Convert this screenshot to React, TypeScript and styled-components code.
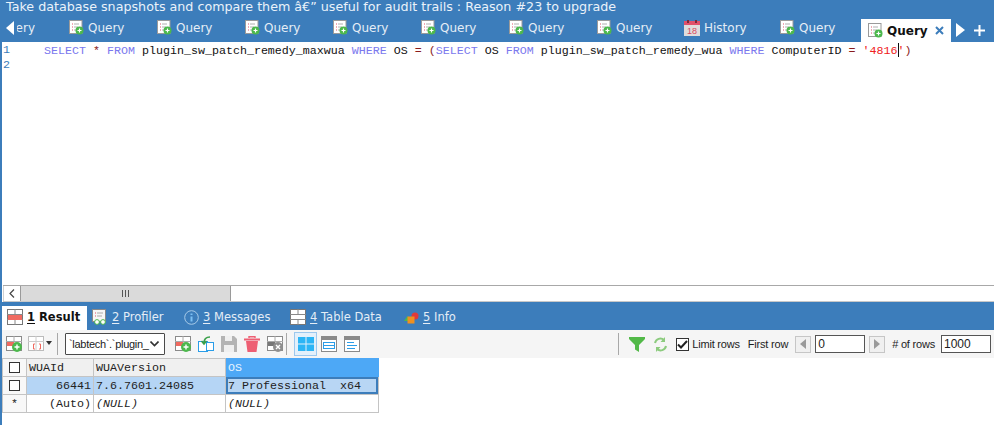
import React from "react";
import styled, { createGlobalStyle } from "styled-components";

const BLUE = "#3c7dbb";
const SANS = `"DejaVu Sans", Verdana, sans-serif`;
const MONO = `"Liberation Mono", "Courier New", monospace`;
const UI = `"Liberation Sans", Arial, sans-serif`;

const Global = createGlobalStyle`
  html, body { margin: 0; padding: 0; background: #fff; }
  body { width: 994px; height: 425px; overflow: hidden; }
`;

const Page = styled.div`
  width: 994px; height: 425px; display: flex; flex-direction: column;
  box-sizing: border-box; border-left: 2px solid ${BLUE}; background: #fff;
`;
const Title = styled.div`
  height: 15px; background: ${BLUE}; color: #eaf2fa; font: 12.7px/14px ${SANS};
  padding-left: 4px; white-space: nowrap; overflow: hidden;
`;
const QueryTabs = styled.div`
  height: 27px; background: ${BLUE}; display: flex; align-items: flex-end; padding-left: 4px;
  color: #e4edf6; font: 12px/14px ${SANS}; flex: none;
`;
const Clipped = styled.div`
  width: 54px; height: 27px; display: flex; align-items: center; padding-bottom: 2px; box-sizing: border-box;
`;
const ClipText = styled.span`
  width: 18px; margin-left: 3px; overflow: hidden; display: flex; justify-content: flex-end; white-space: nowrap;
`;
const Tab = styled.div<{ $w?: number; $ml?: number }>`
  width: ${p => p.$w ?? 88}px; height: 27px; box-sizing: border-box; padding: 0 0 2px 9px;
  margin-left: ${p => p.$ml ?? 0}px;
  display: flex; align-items: center; gap: 4px; flex: none;
`;
const ActiveTab = styled(Tab)`
  background: #fff; color: #111; font-weight: 700; padding-left: 7px; height: 23px; padding-bottom: 0;
  margin-left: 2px; margin-right: 5px;
`;
const CloseX = styled.svg`margin-left: 3px; flex: none;`;
const Plus = styled.svg`margin: 0 0 6px 9px; flex: none;`;
const NextArrow = styled.svg`margin-bottom: 5px; flex: none;`;

const Editor = styled.div`
  height: 243px; flex: none; padding-top: 1px; box-sizing: border-box; font: 11.67px/15px ${MONO}; color: #111;
`;
const Line = styled.div`display: flex; height: 15px; white-space: pre;`;
const LineNo = styled.span`width: 42px; color: #3c7dbb; padding-left: 1px; box-sizing: border-box; flex: none;`;
const Kw = styled.span`color: #7b78ee;`;
const Op = styled.span`color: #8a1c1c;`;
const Str = styled.span`color: #f02020;`;
const Caret = styled.span`display: inline-block; width: 1px; height: 14px; background: #111; margin: 0 -1px 0 0; vertical-align: -3px;`;

const HScroll = styled.div`
  height: 17px; flex: none; box-sizing: border-box; border-top: 1px solid #a8a8a8; border-bottom: 1px solid #c8c8c8; display: flex; margin-left: 1px;
`;
const ScrollBtn = styled.div`
  width: 16px; display: flex; align-items: center; justify-content: center; background: #fff;
  border-left: 1px solid #d0d0d0;
`;
const Thumb = styled.div`
  width: 211px; background: #dadada; border-left: 1px solid #9a9a9a; border-right: 1px solid #9a9a9a;
  display: flex; align-items: center; justify-content: center; box-sizing: border-box;
`;
const Grip = styled.div`width: 7px; height: 7px; background: repeating-linear-gradient(90deg, #555 0 1px, transparent 1px 3px);`;

const ResultTabs = styled.div`
  height: 28px; flex: none; background: ${BLUE}; display: flex; align-items: flex-end; color: #e4edf6; font: 11.5px/14px ${SANS};
`;
const RTab = styled.div<{ $w: number }>`
  width: ${p => p.$w}px; height: 24px; box-sizing: border-box; flex: none; padding-left: 5px; padding-bottom: 2px;
  display: flex; align-items: center; gap: 4px; white-space: pre;
  u { text-underline-offset: 2px; }
`;
const RActive = styled(RTab)`background: #fff; color: #111; font-weight: 700;`;

const Toolbar = styled.div`
  height: 28px; flex: none; background: #f5f5f5; display: flex; align-items: center;
  font: 11px/14px ${UI}; color: #1c1c1c; white-space: nowrap;
`;
const Tool = styled.span<{ $w?: number }>`
  width: ${p => p.$w ?? 23}px; height: 24px; display: flex; align-items: center; justify-content: center; flex: none; box-sizing: border-box;
`;
const ToolOn = styled(Tool)`
  background: #e3f0fb; border: 1px solid #9cc8ee;
`;
const Sep = styled.span<{ $m: string }>`width: 1px; height: 22px; background: #a8a8a8; margin: ${p => p.$m}; flex: none;`;
const Select = styled.div`
  width: 100px; height: 22px; box-sizing: border-box; border: 1px solid #4a4a4a; background: #fff; border-radius: 1px;
  display: flex; align-items: center; justify-content: space-between; padding: 0 5px 0 3px; font-size: 11px; letter-spacing: -0.3px; overflow: hidden; margin-right: 6px; flex: none;
`;
const Right = styled.div`margin-left: auto; display: flex; align-items: center; padding-right: 3px;`;
const Check = styled.span`
  width: 13px; height: 13px; border: 1px solid #333; box-sizing: border-box; background: #fff; display: flex; align-items: center; justify-content: center; margin: 0 3px 0 8px;
`;
const Label = styled.span<{ $m?: string }>`margin: ${p => p.$m ?? 0}; letter-spacing: -0.2px;`;
const Stepper = styled.span`
  width: 16px; height: 17px; box-sizing: border-box; border: 1px solid #c6c6c6; background: #f0f0f0; display: flex; align-items: center; justify-content: center; flex: none;
`;
const NumBox = styled.div<{ $m?: string }>`
  width: 50px; height: 18px; box-sizing: border-box; border: 1px solid #555; background: #fff; padding-left: 2px; font: 12px/16px ${UI}; margin: ${p => p.$m ?? "0 4px"};
`;

const Grid = styled.table`
  border-collapse: collapse; table-layout: fixed; width: 376px; flex: none; font: 11.67px/14px ${MONO}; color: #222;
  td, th { border: 1px solid #c4c4c4; height: 18px; padding: 0 2px; box-sizing: border-box; font-weight: 400; text-align: left; white-space: pre; overflow: hidden; }
`;
const HeadCell = styled.th`background: #f0f0f0;`;
const HeadSel = styled.th`background: #4da8f6; color: #e8f4ff; && { border-color: #4da8f6; }`;
const RowHead = styled.td`background: #f8f8f8; && { text-align: center; padding: 0; }`;
const Sel = styled.td<{ $r?: boolean }>`background: #b5d5f5; && { text-align: ${p => (p.$r ? "right" : "left")}; }`;
const Focused = styled.td`background: #b8d6f4; box-shadow: inset 0 0 0 2px #3c7dbb;`;
const Plain = styled.td<{ $r?: boolean }>`&& { text-align: ${p => (p.$r ? "right" : "left")}; } `;
const Null = styled.i`font-style: italic;`;
const MiniBox = styled.span`display: inline-block; width: 11px; height: 11px; border: 1px solid #333; box-sizing: border-box; background: #fff; vertical-align: -2px;`;

const QueryIcon = () => (
  <svg width="15" height="15" viewBox="0 0 15 15" style={{ flex: "none" }}>
    <rect x="0.5" y="0.5" width="12.5" height="13" fill="#fff" stroke="#9a9a9a" />
    <path d="M3 4h1M3 7h1M3 10h1" stroke="#e2506a" strokeWidth="1.2" />
    <path d="M5 4h5M5 7h4M5 10h2" stroke="#b0b0b0" strokeWidth="1" />
    <circle cx="10.5" cy="10.5" r="4" fill="#4cb84c" />
    <path d="M8.5 10.5h4M10.5 8.5v4" stroke="#fff" strokeWidth="1.2" />
  </svg>
);
const HistoryIcon = () => (
  <svg width="16" height="16" viewBox="0 0 16 16" style={{ flex: "none" }}>
    <rect x="0" y="4" width="16" height="12" fill="#e0dcdc" />
    <rect x="0" y="1" width="16" height="4" fill="#e2506a" />
    <rect x="3" y="0" width="2" height="3" fill="#7a2a3a" />
    <rect x="11" y="0" width="2" height="3" fill="#7a2a3a" />
    <text x="8" y="14" fontSize="9" fontFamily={UI} fill="#d84860" textAnchor="middle">18</text>
  </svg>
);
const Code = () => (
  <span>
    <Kw>SELECT</Kw> <Op>*</Op> <Kw>FROM</Kw> plugin_sw_patch_remedy_maxwua <Kw>WHERE</Kw> OS <Op>=</Op> <Op>(</Op><Kw>SELECT</Kw> OS <Kw>FROM</Kw> plugin_sw_patch_remedy_wua <Kw>WHERE</Kw> ComputerID <Op>=</Op> <Str>'4816</Str><Caret /><Str>'</Str><Op>)</Op>
  </span>
);
const GridIcon = ({ red }: { red?: boolean }) => (
  <svg width="16" height="16" viewBox="0 0 16 16" style={{ flex: "none" }}>
    <rect x="0.5" y="0.5" width="15" height="15" fill="#fff" stroke="#777" />
    <path d="M0 5.5h16M0 10.5h16M8 0v5M8 11v5" stroke="#888" />
    {red && <rect x="1" y="6" width="14" height="5" fill="#f06a60" />}
  </svg>
);
const AddRow = () => (
  <svg width="16" height="16" viewBox="0 0 16 16">
    <rect x="0.5" y="0.5" width="15" height="14" fill="#fff" stroke="#8a8a8a" />
    <path d="M0 5.5h16M8 0v15" stroke="#aaa" />
    <rect x="1" y="6" width="7" height="4" fill="#f06a60" />
    <circle cx="11" cy="11" r="5" fill="#4cb84c" />
    <path d="M8.5 11h5M11 8.5v5" stroke="#fff" strokeWidth="1.4" />
  </svg>
);
const RemoveRow = () => (
  <svg width="16" height="16" viewBox="0 0 16 16">
    <rect x="0.5" y="0.5" width="15" height="14" fill="#fff" stroke="#8a8a8a" />
    <path d="M0 5.5h16M8 0v15" stroke="#aaa" />
    <rect x="1" y="6" width="7" height="4" fill="#777" />
    <circle cx="11" cy="11" r="5" fill="#8f8f8f" />
    <path d="M9 9l4 4M13 9l-4 4" stroke="#fff" strokeWidth="1.4" />
  </svg>
);

export default function App() {
  return (
    <Page>
      <Global />
      <Title>Take database snapshots and compare them â€” useful for audit trails : Reason #23 to upgrade</Title>
      <QueryTabs>
        <Clipped>
          <svg width="8" height="14" viewBox="0 0 8 14"><path d="M8 0v14L0 7z" fill="#fff" /></svg>
          <ClipText>ery</ClipText>
        </Clipped>
        {Array.from({ length: 7 }, (_, i) => (
          <Tab key={i}><QueryIcon />Query</Tab>
        ))}
        <Tab $w={96} $ml={-1}><HistoryIcon />History</Tab>
        <Tab><QueryIcon />Query</Tab>
        <ActiveTab $w={90}>
          <QueryIcon />Query
          <CloseX width="9" height="9" viewBox="0 0 9 9"><path d="M1 1l7 7M8 1l-7 7" stroke="#3c7dbb" strokeWidth="2" /></CloseX>
        </ActiveTab>
        <NextArrow width="9" height="14" viewBox="0 0 9 14"><path d="M0 0v14l9-7z" fill="#fff" /></NextArrow>
        <Plus width="11" height="11" viewBox="0 0 11 11"><path d="M5.5 0v11M0 5.5h11" stroke="#fff" strokeWidth="2" /></Plus>
      </QueryTabs>
      <Editor>
        <Line><LineNo>1</LineNo><Code /></Line>
        <Line><LineNo>2</LineNo></Line>
      </Editor>
      <HScroll>
        <ScrollBtn>
          <svg width="6" height="9" viewBox="0 0 6 9"><path d="M5 0.5L1 4.5l4 4" fill="none" stroke="#444" strokeWidth="1.2" /></svg>
        </ScrollBtn>
        <Thumb><Grip /></Thumb>
      </HScroll>
      <ResultTabs>
        <RActive $w={85}><GridIcon red /><span><u>1</u> Result</span></RActive>
        <RTab $w={92}>
          <svg width="16" height="17" viewBox="0 0 16 17" style={{ flex: "none" }}>
            <rect x="0.5" y="0.5" width="13" height="12" fill="#f6f6f6" stroke="#888" />
            <path d="M3 4h1M3 7h1" stroke="#e2506a" /><path d="M5 4h6M5 7h5" stroke="#aaa" />
            <circle cx="5" cy="13" r="2.4" fill="#fff" stroke="#4cb84c" /><circle cx="11" cy="13" r="2.4" fill="#fff" stroke="#4cb84c" />
          </svg>
          <span><u>2</u> Profiler</span>
        </RTab>
        <RTab $w={106}>
          <svg width="15" height="15" viewBox="0 0 15 15" style={{ flex: "none" }}>
            <circle cx="7.5" cy="7.5" r="6.8" fill="#3c7dbb" stroke="#a8cbe8" />
            <path d="M7.5 3.5v1.5M7.5 6.5v5" stroke="#7cc0f4" strokeWidth="2" />
          </svg>
          <span><u>3</u> Messages</span>
        </RTab>
        <RTab $w={114}><GridIcon /><span><u>4</u> Table Data</span></RTab>
        <RTab $w={80}>
          <svg width="15" height="15" viewBox="0 0 15 15" style={{ flex: "none" }}>
            <path d="M0 11l3.5-5L7 11z" fill="#4cb84c" />
            <circle cx="11" cy="6" r="3.5" fill="#e03a3a" />
            <rect x="3.5" y="6.5" width="7" height="7" fill="#f09020" />
          </svg>
          <span><u>5</u> Info</span>
        </RTab>
      </ResultTabs>
      <Toolbar>
        <Tool><AddRow /></Tool>
        <Tool $w={30}>
          <svg width="24" height="16" viewBox="0 0 24 16">
            <rect x="0.5" y="0.5" width="15" height="14" fill="#fff" stroke="#bbb" />
            <path d="M0 5.5h16M8 0v15" stroke="#ccc" />
            <path d="M7 8H5.500v5H7M11 8h1.500v5H11" fill="none" stroke="#f06a60" />
            <path d="M18 5h6l-3 4z" fill="#333" />
          </svg>
        </Tool>
        <Sep $m="0 7px 0 2px" />
        <Select>
          <span>`labtech`.`plugin_</span>
          <svg width="9" height="6" viewBox="0 0 9 6" style={{ flex: "none" }}><path d="M0.5 0.5l4 4 4-4" fill="none" stroke="#333" strokeWidth="1.6" /></svg>
        </Select>
        <Tool><AddRow /></Tool>
        <Tool>
          <svg width="16" height="16" viewBox="0 0 16 16">
            <rect x="0.5" y="5.5" width="9" height="10" fill="#fff" stroke="#2a9de8" />
            <rect x="8.5" y="6.5" width="7" height="8" fill="#fff" stroke="#2a9de8" />
            <path d="M12 1C8 1 6 3 6 7M3.5 5L6 8l2.5-3" fill="none" stroke="#3aa04a" strokeWidth="1.6" />
          </svg>
        </Tool>
        <Tool>
          <svg width="16" height="16" viewBox="0 0 16 16">
            <path d="M0 0h13l3 3v13H0z" fill="#b4b4b4" />
            <rect x="4" y="0" width="7" height="5" fill="#f0f0f0" />
            <rect x="3" y="9" width="10" height="7" fill="#f0f0f0" />
          </svg>
        </Tool>
        <Tool>
          <svg width="16" height="16" viewBox="0 0 16 16">
            <path d="M0 2.500h16v2H0zM2 5h12l-1.500 11h-9z" fill="#ee5f73" />
            <path d="M5 2V0.800h6V2" fill="none" stroke="#ee5f73" strokeWidth="1.4" />
          </svg>
        </Tool>
        <Tool><RemoveRow /></Tool>
        <Sep $m="0 7px 0 0" />
        <ToolOn>
          <svg width="16" height="14" viewBox="0 0 16 14">
            <path d="M0 0h7.500v6.500H0zM8.500 0H16v6.500H8.500zM0 7.500h7.500V14H0zM8.500 7.500H16V14H8.500z" fill="#2cb5f5" />
          </svg>
        </ToolOn>
        <Tool>
          <svg width="16" height="16" viewBox="0 0 16 16">
            <rect x="0.5" y="0.500" width="15" height="15" fill="#fff" stroke="#8a8a8a" />
            <rect x="0" y="0" width="16" height="4" fill="#8a8a8a" />
            <rect x="2.500" y="6.500" width="11" height="6" fill="#fff" stroke="#2a9de8" />
            <path d="M3 9.500h10" stroke="#2a9de8" />
          </svg>
        </Tool>
        <Tool>
          <svg width="16" height="16" viewBox="0 0 16 16">
            <rect x="0.5" y="0.500" width="15" height="15" fill="#fff" stroke="#8a8a8a" />
            <rect x="0" y="0" width="16" height="4" fill="#8a8a8a" />
            <path d="M3 6.500h7M3 9.500h10M3 12.500h8" stroke="#2a9de8" />
          </svg>
        </Tool>
        <Right>
          <Sep $m="0 10px 0 0" />
          <svg width="16" height="16" viewBox="0 0 16 16" style={{ flex: "none" }}>
            <path d="M0 1h16v2l-6 6v7l-4-2.500V9L0 3z" fill="#52b948" />
          </svg>
          <svg width="15" height="15" viewBox="0 0 15 15" style={{ marginLeft: 8, flex: "none" }}>
            <path d="M2 6a5.500 5.500 0 0 1 9-3M13 9a5.500 5.500 0 0 1-9 3" fill="none" stroke="#8ccb7e" strokeWidth="2" />
            <path d="M12 0v5H7.500zM3 15v-5h4.500z" fill="#8ccb7e" />
          </svg>
          <Check>
            <svg width="11" height="9" viewBox="0 0 11 9"><path d="M1 4.500l3 3 6-6.500" fill="none" stroke="#222" strokeWidth="2" /></svg>
          </Check>
          <Label>Limit rows</Label>
          <Label $m="0 7px 0 8px">First row</Label>
          <Stepper><svg width="6" height="10" viewBox="0 0 6 10"><path d="M6 0v10L0 5z" fill="#9a9a9a" /></svg></Stepper>
          <NumBox>0</NumBox>
          <Stepper><svg width="6" height="10" viewBox="0 0 6 10"><path d="M0 0v10l6-5z" fill="#9a9a9a" /></svg></Stepper>
          <Label $m="0 6px 0 7px"># of rows</Label>
          <NumBox $m="0">1000</NumBox>
        </Right>
      </Toolbar>
      <Grid>
        <colgroup>
          <col width="24" /><col width="67" /><col width="132" /><col width="153" />
        </colgroup>
        <tbody>
          <tr>
            <RowHead as="th"><MiniBox /></RowHead>
            <HeadCell>WUAId</HeadCell>
            <HeadCell>WUAVersion</HeadCell>
            <HeadSel>OS</HeadSel>
          </tr>
          <tr>
            <RowHead><MiniBox /></RowHead>
            <Sel $r>66441</Sel>
            <Sel>7.6.7601.24085</Sel>
            <Focused>7 Professional  x64</Focused>
          </tr>
          <tr>
            <RowHead>*</RowHead>
            <Plain $r>(Auto)</Plain>
            <Plain><Null>(NULL)</Null></Plain>
            <Plain><Null>(NULL)</Null></Plain>
          </tr>
        </tbody>
      </Grid>
    </Page>
  );
}
